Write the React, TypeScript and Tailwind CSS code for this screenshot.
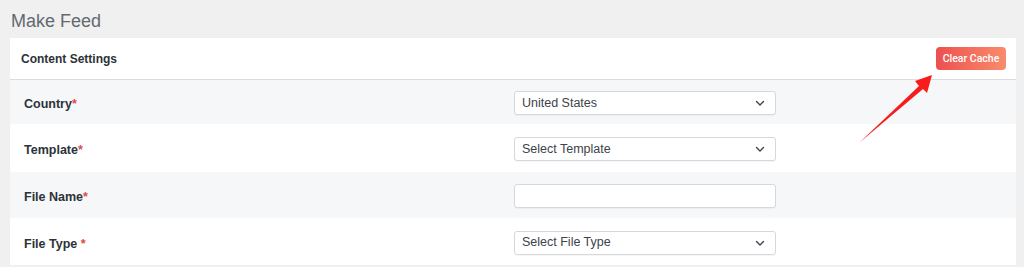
import React from "react";

const Chevron = () => (
  <svg width="12" height="12" viewBox="0 0 12 12" fill="none" className="absolute right-[9px] top-1/2 -translate-y-1/2">
    <path d="M2.5 4.5 L6 8 L9.5 4.5" stroke="#3c434a" strokeWidth="1.4" strokeLinecap="round" strokeLinejoin="round" />
  </svg>
);

const SelectBox = ({ text }: { text: string }) => (
  <div className="relative w-[262px] h-[24px] mt-[2px] bg-white border border-[#d5d8dc] rounded-[3px] flex items-center pl-[7px] text-[12.5px] text-[#3c434a] shadow-[0_1px_1px_rgba(0,0,0,0.04)]">
    {text}
    <Chevron />
  </div>
);

const InputBox = () => (
  <div className="w-[262px] h-[24px] mt-[2px] bg-white border border-[#d5d8dc] rounded-[3px] shadow-[0_1px_1px_rgba(0,0,0,0.04)]" />
);

const Row = ({ label, star, bg, h, children }: { label: string; star: string; bg: string; h: string; children: React.ReactNode }) => (
  <div className={`flex items-center ${bg} ${h}`}>
    <div className="w-[504px] pl-[14px] pt-[5px] text-[12.5px] font-bold text-[#2c3338]">
      {label}
      <span className="text-[#e54848]">{star}</span>
    </div>
    {children}
  </div>
);

export default function App() {
  return (
    <div className="relative w-[1024px] h-[267px] bg-[#f0f0f1] overflow-hidden" style={{ fontFamily: '"Liberation Sans", Arial, sans-serif' }}>
      <div className="pl-[11px] pt-[10px] h-[38px] text-[18px] text-[#646970] leading-[22px]">Make Feed</div>
      <div className="ml-[10px] w-[1006px] bg-white">
        <div className="h-[42px] flex items-center justify-between pl-[11px] pr-[10px] border-b border-[#dcdcde]">
          <div className="text-[12px] font-bold text-[#2c3338]">Content Settings</div>
          <div
            className="h-[23px] w-[70px] rounded-[4px] bg-gradient-to-r from-[#ec4f4f] to-[#f98b6c] text-white text-[10.5px] font-medium flex items-center justify-center font-[Roboto,sans-serif]"
          >
            Clear Cache
          </div>
        </div>
        <Row label="Country" star="*" bg="bg-[#f6f7f9]" h="h-[44px]">
          <SelectBox text="United States" />
        </Row>
        <Row label="Template" star="*" bg="bg-white" h="h-[48px]">
          <SelectBox text="Select Template" />
        </Row>
        <Row label="File Name" star="*" bg="bg-[#f6f7f9]" h="h-[46px]">
          <InputBox />
        </Row>
        <Row label="File Type" star=" *" bg="bg-white" h="h-[47px]">
          <SelectBox text="Select File Type" />
        </Row>
      </div>
      <svg className="absolute left-0 top-0 pointer-events-none" width="1024" height="267" viewBox="0 0 1024 267">
        <polygon points="859,143 919,86 915,81 932,75 927,93 923,89" fill="#f81c1c" strokeLinejoin="round" />
      </svg>
    </div>
  );
}
